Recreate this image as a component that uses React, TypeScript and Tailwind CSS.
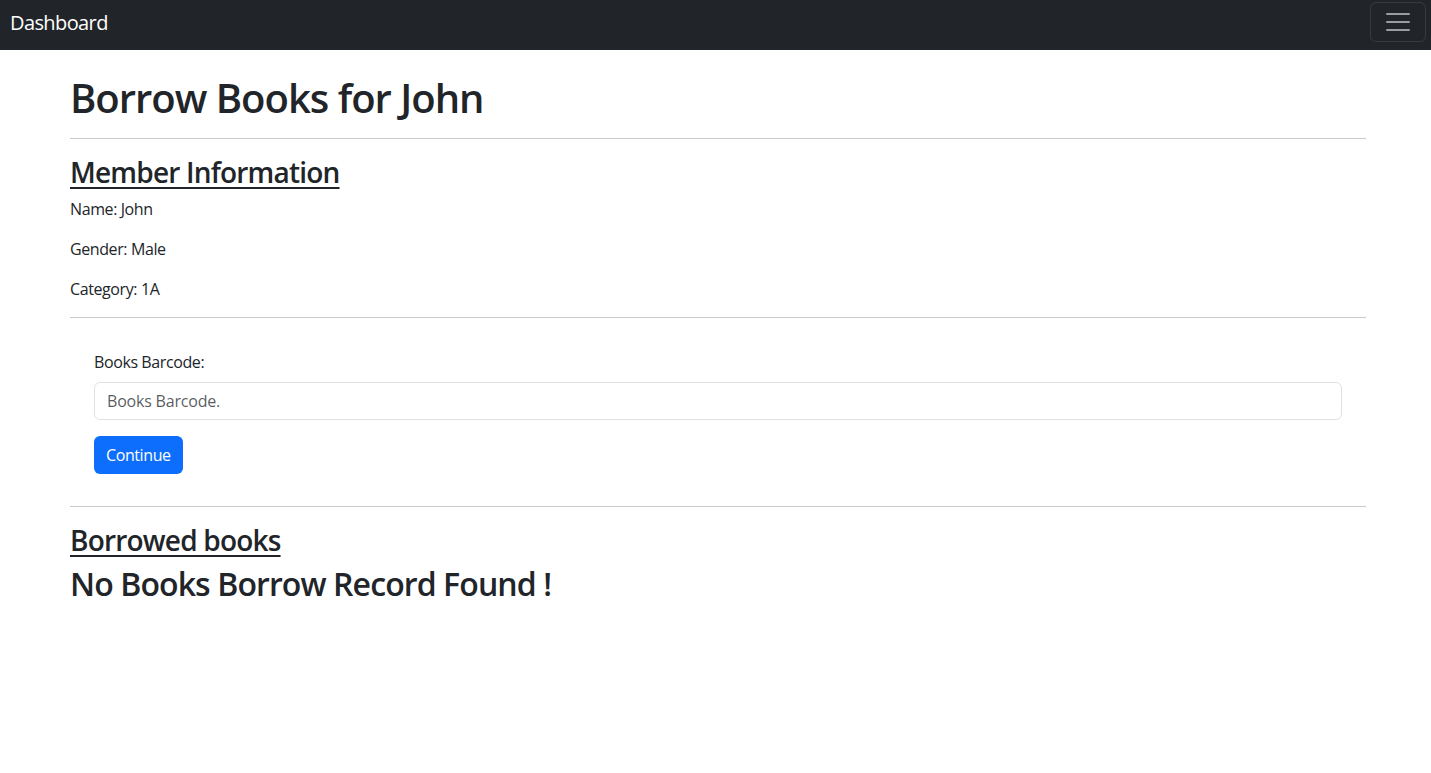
export default function App() {
  return (
    <div className="min-h-screen bg-white text-[#212529] font-['Open_Sans',sans-serif] tracking-[-0.4px]">
      {/* Navbar */}
      <nav className="h-[50px] bg-[#212529] flex items-center justify-between pl-[10px] pr-[5px]">
        <a href="#" className="text-white text-[20px] leading-[30px] mb-[4px] tracking-[-0.6px]">
          Dashboard
        </a>
        <button className="w-[56px] h-[40px] mb-[6px] rounded-[6px] border border-white/10 flex items-center justify-center">
          <svg width="30" height="30" viewBox="0 0 30 30">
            <path
              d="M4 7h22M4 15h22M4 23h22"
              stroke="rgba(255,255,255,0.55)"
              strokeWidth="2"
              strokeLinecap="round"
            />
          </svg>
        </button>
      </nav>

      <main className="pl-[70px] pr-[65px]">
        <h1 className="mt-6 text-[40px] leading-[48px] font-semibold tracking-[-1px]">Borrow Books for John</h1>
        <hr className="mt-4 mb-4 border-t border-[#c8c9ca]" />

        <h3 className="text-[28px] leading-[34px] font-semibold tracking-[-0.8px] underline underline-offset-[4px] decoration-[2px]">
          Member Information
        </h3>
        <div className="mt-2 text-[16px] leading-6">
          <p className="mb-4">Name: John</p>
          <p className="mb-4">Gender: Male</p>
          <p>Category: 1A</p>
        </div>
        <hr className="mt-4 border-t border-[#c8c9ca]" />

        {/* Barcode form */}
        <form className="px-6 py-8" onSubmit={(e) => e.preventDefault()}>
          <label className="block text-[16px] leading-6 mb-2">Books Barcode:</label>
          <input
            type="text"
            placeholder="Books Barcode."
            className="w-full h-[38px] px-3 rounded-[6px] border border-[#dee2e6] text-[16px] tracking-[-0.2px] placeholder:text-[#212529]/75 outline-none"
          />
          <button className="mt-4 h-[38px] px-3 rounded-[6px] bg-[#0d6efd] text-white text-[16px]">
            Continue
          </button>
        </form>
        <hr className="mb-4 border-t border-[#c8c9ca]" />

        <h3 className="text-[28px] leading-[34px] font-semibold tracking-[-0.8px] underline underline-offset-[4px] decoration-[2px]">
          Borrowed books
        </h3>
        <h2 className="mt-2 text-[32px] leading-[38px] font-semibold tracking-[-0.9px]">No Books Borrow Record Found !</h2>
      </main>
    </div>
  );
}
